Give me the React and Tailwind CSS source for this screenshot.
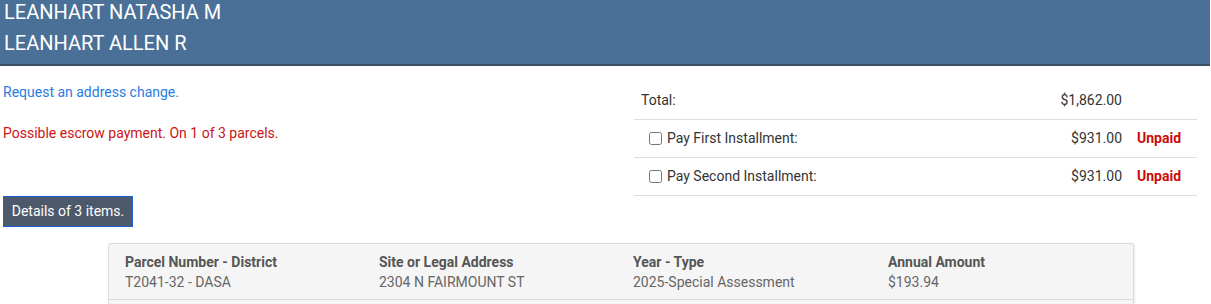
import React from "react";

const rows = [
  { label: "Pay First Installment:", amount: "$931.00" },
  { label: "Pay Second Installment:", amount: "$931.00" },
];

export default function App() {
  return (
    <div className="w-[1211px] bg-white font-['Roboto','Liberation_Sans',sans-serif]">
      {/* Owner header */}
      <div className="mr-px h-[66px] bg-[#4a7097] border-b-2 border-[#3f4f63] pl-[4px] flex flex-col gap-[6px] text-white text-[20px] leading-[25px]">
        <div>LEANHART NATASHA M</div>
        <div>LEANHART ALLEN R</div>
      </div>

      <div className="flex">
        {/* Left column */}
        <div className="w-[634px] pl-[3px] pt-[18px] text-[14px]">
          <a href="#" className="text-[#2a7de1] leading-[16px] block">
            Request an address change.
          </a>
          <p className="mt-[25px] text-[#cc1414] leading-[16px]">
            Possible escrow payment. On 1 of 3 parcels.
          </p>
          <button className="mt-[55px] h-[31px] w-[130px] bg-[#4b596b] border border-[#1d5fd6] text-white text-[14px]">
            Details of 3 items.
          </button>
        </div>

        {/* Payment summary */}
        <div className="w-[563px] pt-[16px] text-[14px] text-[#333]">
          <div className="flex items-center h-[38px] border-b border-[#dedede] pl-[7px]">
            <span className="flex-1">Total:</span>
            <span className="text-right pr-[75px]">$1,862.00</span>
          </div>
          {rows.map((r) => (
            <div
              key={r.label}
              className="flex items-center h-[38px] border-b border-[#dedede] pl-[15px]"
            >
              <input type="checkbox" className="w-[13px] h-[13px] mr-[5px]" />
              <span className="flex-1">{r.label}</span>
              <span className="text-right">{r.amount}</span>
              <span className="w-[75px] pl-[15px] font-bold text-[#cc0a0a]">Unpaid</span>
            </div>
          ))}
        </div>
      </div>

      {/* Parcel detail card */}
      <div className="ml-[108px] mt-[16px] w-[1026px] h-[70px] bg-[#f5f5f5] border border-[#dcdcdc] rounded-t-[3px] shadow-[1px_0_2px_rgba(0,0,0,0.08)]">
        <div className="grid grid-cols-[254px_254px_255px_1fr] pl-[16px] pt-[8px] pb-[7px] text-[14px] leading-[20px] border-b border-[#dcdcdc]">
          <div>
            <div className="font-bold text-[#555]">Parcel Number - District</div>
            <div className="text-[#666]">T2041-32 - DASA</div>
          </div>
          <div>
            <div className="font-bold text-[#555]">Site or Legal Address</div>
            <div className="text-[#666]">2304 N FAIRMOUNT ST</div>
          </div>
          <div>
            <div className="font-bold text-[#555]">Year - Type</div>
            <div className="text-[#666]">2025-Special Assessment</div>
          </div>
          <div>
            <div className="font-bold text-[#555]">Annual Amount</div>
            <div className="text-[#666]">$193.94</div>
          </div>
        </div>
      </div>
    </div>
  );
}
